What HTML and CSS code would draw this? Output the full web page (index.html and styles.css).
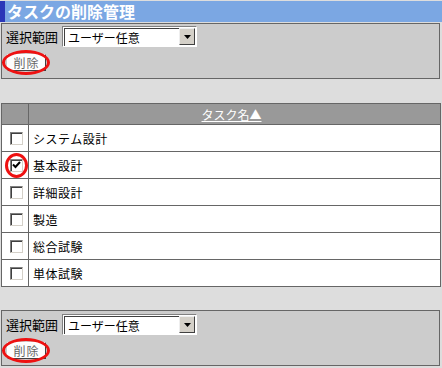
FILE: index.html
```html
<!DOCTYPE html>
<html lang="ja">
<head>
<meta charset="utf-8">
<link rel="stylesheet" href="styles.css">
</head>
<body>
<div class="title">タスクの削除管理</div>
<div class="panel">
  <div class="range-row">
    <span class="label">選択範囲</span>
    <span class="select"><span class="select-text">ユーザー任意</span><span class="select-btn"><svg width="7" height="4" viewBox="0 0 7 4"><path d="M0 0h7L3.5 4z" fill="#000"/></svg></span></span>
  </div>
  <div class="btn-row">
    <span class="btn-wrap"><span class="btn">削除</span><span class="ring ring-btn"></span></span>
  </div>
</div>

<table class="tasks">
  <thead>
    <tr><th class="chk-col"></th><th class="name-col"><span class="sort">タスク名▲</span></th></tr>
  </thead>
  <tbody>
    <tr><td class="chk-cell"><span class="cb"></span></td><td>システム設計</td></tr>
    <tr><td class="chk-cell"><span class="cb-wrap"><span class="cb"><svg width="9" height="8" viewBox="0 0 9 8"><path d="M1 3.5l2.5 2.5L8 1" fill="none" stroke="#000" stroke-width="2"/></svg></span><span class="ring ring-cb"></span></span></td><td>基本設計</td></tr>
    <tr><td class="chk-cell"><span class="cb"></span></td><td>詳細設計</td></tr>
    <tr><td class="chk-cell"><span class="cb"></span></td><td>製造</td></tr>
    <tr><td class="chk-cell"><span class="cb"></span></td><td>総合試験</td></tr>
    <tr><td class="chk-cell"><span class="cb"></span></td><td>単体試験</td></tr>
  </tbody>
</table>

<div class="panel panel-bottom">
  <div class="range-row">
    <span class="label">選択範囲</span>
    <span class="select"><span class="select-text">ユーザー任意</span><span class="select-btn"><svg width="7" height="4" viewBox="0 0 7 4"><path d="M0 0h7L3.5 4z" fill="#000"/></svg></span></span>
  </div>
  <div class="btn-row">
    <span class="btn-wrap"><span class="btn">削除</span><span class="ring ring-btn"></span></span>
  </div>
</div>
</body>
</html>
```

FILE: styles.css
```css
* { box-sizing: border-box; }
body {
  margin: 0;
  background: #dddddd;
  font-family: "Noto Sans CJK JP", "Noto Sans", sans-serif;
  font-size: 12px;
  color: #000;
  width: 442px;
  height: 368px;
  overflow: hidden;
}
.title {
  margin-top: 1px;
  height: 21px;
  background: #7ba7e3;
  border-left: 5px solid #2a36b8;
  color: #fff;
  font-weight: bold;
  font-size: 16px;
  line-height: 21px;
  padding-left: 2px;
  white-space: nowrap;
}
.panel {
  margin: 1px 2px 0 1px;
  height: 56px;
  border: 1px solid #666;
  background: #cccccc;
  padding: 2px 0 0 4px;
}
.range-row {
  display: flex;
  align-items: center;
  height: 21px;
}
.label {
  font-size: 13px;
  width: 56px;
}
.select {
  display: flex;
  align-items: center;
  width: 135px;
  height: 21px;
  background: #fff;
  border: 1px solid;
  border-color: #808080 #fff #fff #808080;
  padding: 1px;
}
.select-text {
  flex: 1;
  padding-left: 3px;
  font-size: 12px;
  line-height: 17px;
  border-top: 1px solid #404040;
  border-left: 1px solid #404040;
  height: 18px;
}
.select-btn {
  width: 16px;
  height: 17px;
  background: #d4d0c8;
  border: 1px solid;
  border-color: #eee #404040 #404040 #eee;
  display: flex;
  align-items: center;
  justify-content: center;
}
.btn-row {
  margin-top: 7px;
  display: flex;
  padding-left: 1px;
}
.btn-wrap {
  position: relative;
  display: inline-block;
}
.btn {
  display: block;
  width: 39px;
  height: 17px;
  background: #fdfdfd;
  border: 1px solid;
  border-color: #fff #404040 #404040 #fff;
  color: #666;
  font-size: 12px;
  line-height: 15px;
  text-align: center;
  letter-spacing: 1px;
}
.ring {
  position: absolute;
  border: 3px solid #ee1111;
  border-radius: 50%;
}
.ring-btn {
  left: -5px;
  top: -4px;
  width: 48px;
  height: 25px;
}
.tasks {
  margin: 24px 0 0 1px;
  width: 440px;
  border-collapse: collapse;
  background: #fff;
  border: 1px solid #666;
}
.tasks th {
  background: #999999;
  height: 21px;
  border: 1px solid #666;
  padding: 0;
  font-weight: normal;
  color: #fff;
  font-size: 12px;
}
.tasks th.name-col { padding-right: 6px; }
.sort { text-decoration: underline; }
.tasks td {
  height: 27px;
  border: 1px solid #666;
  padding: 0 0 0 4px;
  font-size: 12px;
  letter-spacing: 0.5px;
}
.tasks .chk-col, .tasks .chk-cell { width: 27px; }
.tasks td.chk-cell {
  padding: 0 0 0 8px;
}
.cb-wrap {
  position: relative;
  display: block;
  width: 13px;
  height: 13px;
}
.cb {
  display: flex;
  align-items: center;
  justify-content: center;
  width: 13px;
  height: 13px;
  background: #fff;
  border: 1px solid;
  border-color: #808080 #d4d0c8 #d4d0c8 #808080;
  box-shadow: inset 1px 1px 0 #404040;
}
.ring-cb {
  left: -5px;
  top: -6px;
  width: 23px;
  height: 25px;
}
.panel-bottom {
  margin-top: 23px;
  padding-top: 3px;
}
```
